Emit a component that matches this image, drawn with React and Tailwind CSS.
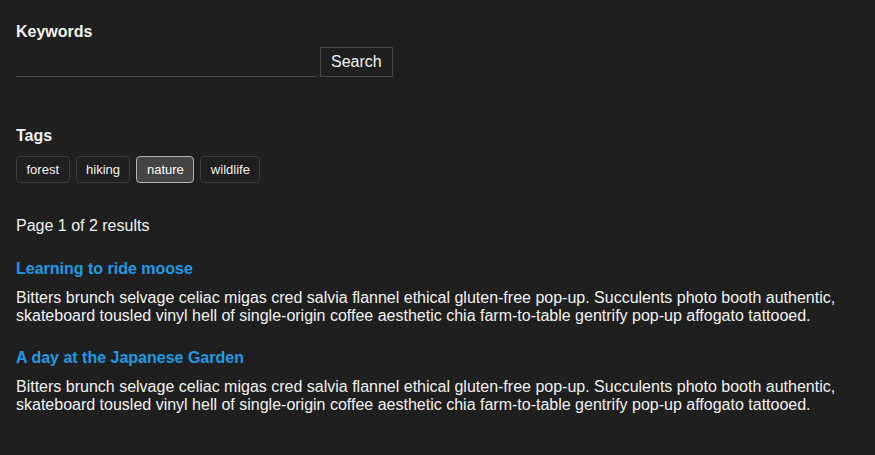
import { useState } from 'react'

const tags = ['forest', 'hiking', 'nature', 'wildlife']

const lorem =
  'Bitters brunch selvage celiac migas cred salvia flannel ethical gluten-free pop-up. Succulents photo booth authentic, skateboard tousled vinyl hell of single-origin coffee aesthetic chia farm-to-table gentrify pop-up affogato tattooed.'

const posts = [
  { title: 'Learning to ride moose', body: lorem },
  { title: 'A day at the Japanese Garden', body: lorem },
]

export default function App() {
  const [query, setQuery] = useState('')
  const [active, setActive] = useState('nature')

  return (
    <div className="min-h-screen w-full bg-[#1f1f1f] px-4 pt-[23px] font-['Liberation_Sans',Arial,sans-serif] text-base leading-[normal] text-[#f2f2f2]">
      {/* search */}
      <div>
        <p className="font-bold">Keywords</p>
        <div className="mt-[6px] flex items-end gap-1">
          <input
            value={query}
            onChange={(e) => setQuery(e.target.value)}
            className="h-[30px] w-[300px] border-b border-[#4a4a4a] bg-transparent text-[#f2f2f2] outline-none"
          />
          <button
            type="button"
            className="border border-[#484848] px-[10px] py-[5px] leading-[normal] text-[#f2f2f2]"
          >
            Search
          </button>
        </div>
      </div>

      {/* tags */}
      <div className="mt-[50px]">
        <p className="font-bold">Tags</p>
        <div className="mt-[11px] flex gap-[6px]">
          {tags.map((t) => (
            <button
              key={t}
              type="button"
              onClick={() => setActive(t)}
              className={`rounded-[4px] border px-[9.5px] py-[5px] text-[13px] leading-[15px] ${
                active === t
                  ? 'border-[#b5b5b5] bg-[#444444] text-white'
                  : 'border-[#3c3c3c] text-[#f2f2f2]'
              }`}
            >
              {t}
            </button>
          ))}
        </div>
      </div>

      <p className="mt-[34px]">Page 1 of 2 results</p>

      {posts.map((p, i) => (
        <div key={p.title} className={i === 0 ? 'mt-[25px]' : 'mt-[24px]'}>
          <h3 className="font-bold text-[#1f9be6]">{p.title}</h3>
          <p className="mt-[11px]">{p.body}</p>
        </div>
      ))}
    </div>
  )
}
